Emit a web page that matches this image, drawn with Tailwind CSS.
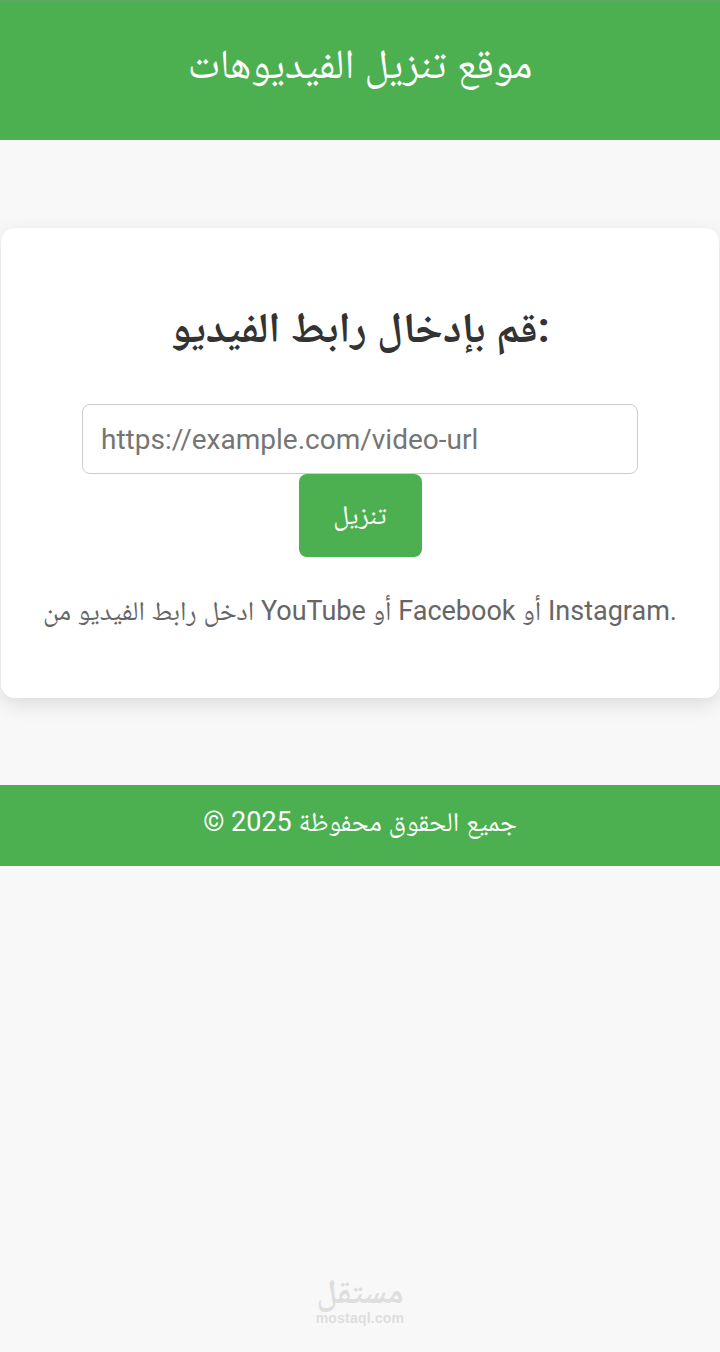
<!DOCTYPE html>
<html lang="ar">
<head>
    <meta charset="UTF-8">
    <title>موقع تنزيل الفيديوهات</title>
    <script src="https://cdn.jsdelivr.net/npm/@tailwindcss/browser@4"></script>
</head>
<body class="bg-[#f8f8f8] h-[1352px] overflow-hidden relative font-['Roboto','Noto_Naskh_Arabic','Noto_Sans_Arabic','Noto_Sans',sans-serif]">
    <header class="bg-[#4caf50] border-t-2 border-[#5ca860] h-[140px] flex items-center justify-center text-white text-[41.5px]">
        <h1 class="-mt-[14px]">موقع تنزيل الفيديوهات</h1>
    </header>
    <main class="mt-[88px] mx-px bg-white rounded-[14px] shadow-[0_6px_20px_rgba(0,0,0,0.12)] h-[470px] flex flex-col items-center pt-[72px]">
        <h2 class="text-[42.5px] font-bold text-[#333] leading-[56px]">قم بإدخال رابط الفيديو:</h2>
        <input type="text" placeholder="https://example.com/video-url" class="mt-[48px] w-[556px] h-[70px] border border-[#ccc] rounded-lg px-[18px] text-[28px] placeholder:text-[#757575] bg-white">
        <button class="w-[123px] h-[83px] bg-[#4caf50] text-white text-[27px] rounded-lg">تنزيل</button>
        <p class="mt-[34px] text-[27px] text-[#666] whitespace-nowrap">ادخل رابط الفيديو من YouTube أو Facebook أو Instagram.</p>
    </main>
    <footer class="mt-[87px] bg-[#4caf50] h-[81px] flex items-center justify-center text-white text-[27px]">
        <p class="-mt-[6px]">© 2025 جميع الحقوق محفوظة</p>
    </footer>
    <div class="absolute left-0 right-0 top-[1272px] flex flex-col items-center text-[#dedede] font-bold">
        <span class="text-[34px] leading-[39px]">مستقل</span>
        <span class="text-[14px] leading-[14px] tracking-[0.2px] font-['Liberation_Sans',sans-serif]">mostaql.com</span>
    </div>
</body>
</html>
